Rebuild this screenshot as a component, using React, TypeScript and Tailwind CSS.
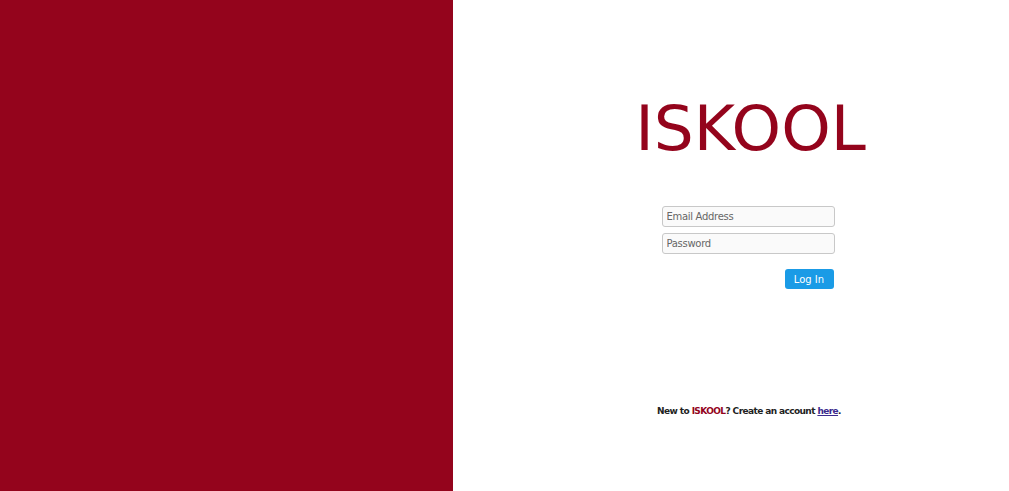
export default function App() {
  return (
    <div className="flex h-[491px] w-full overflow-hidden" style={{ fontFamily: '"DejaVu Sans", Verdana, sans-serif' }}>
      <div className="w-[453px] shrink-0 bg-[#94041c]" />
      <div className="flex flex-1 flex-col items-center bg-white pl-[36px]">
        <h1 className="mt-[93px] pl-[3px] text-[63px] leading-[72px] text-[#94041c]">ISKOOL</h1>
        <form className="mt-[41px] mr-[2px] flex w-[173px] flex-col" onSubmit={(e) => e.preventDefault()}>
          <input
            type="text"
            placeholder="Email Address"
            className="h-[21px] w-full rounded-[3px] border border-[#c8c8c8] bg-[#fafafa] px-[4px] text-[10px] tracking-[-0.3px] text-[#555] placeholder:text-[#666] outline-none"
          />
          <input
            type="password"
            placeholder="Password"
            className="mt-[6px] h-[21px] w-full rounded-[3px] border border-[#c8c8c8] bg-[#fafafa] px-[4px] text-[10px] tracking-[-0.3px] text-[#555] placeholder:text-[#666] outline-none"
          />
          <div className="mt-[15px] flex justify-end pr-[1px]">
            <button type="submit" className="h-[20px] w-[49px] rounded-[3px] bg-[#1a9be6] text-[10px] text-white">
              Log In
            </button>
          </div>
        </form>
        <p className="mt-[116px] text-[9px] font-bold tracking-[-0.6px] text-[#222]">
          New to <span className="text-[#94041c]">ISKOOL</span>? Create an account{' '}
          <a href="#" className="text-[#3b2a8c] underline">here</a>.
        </p>
      </div>
    </div>
  );
}
